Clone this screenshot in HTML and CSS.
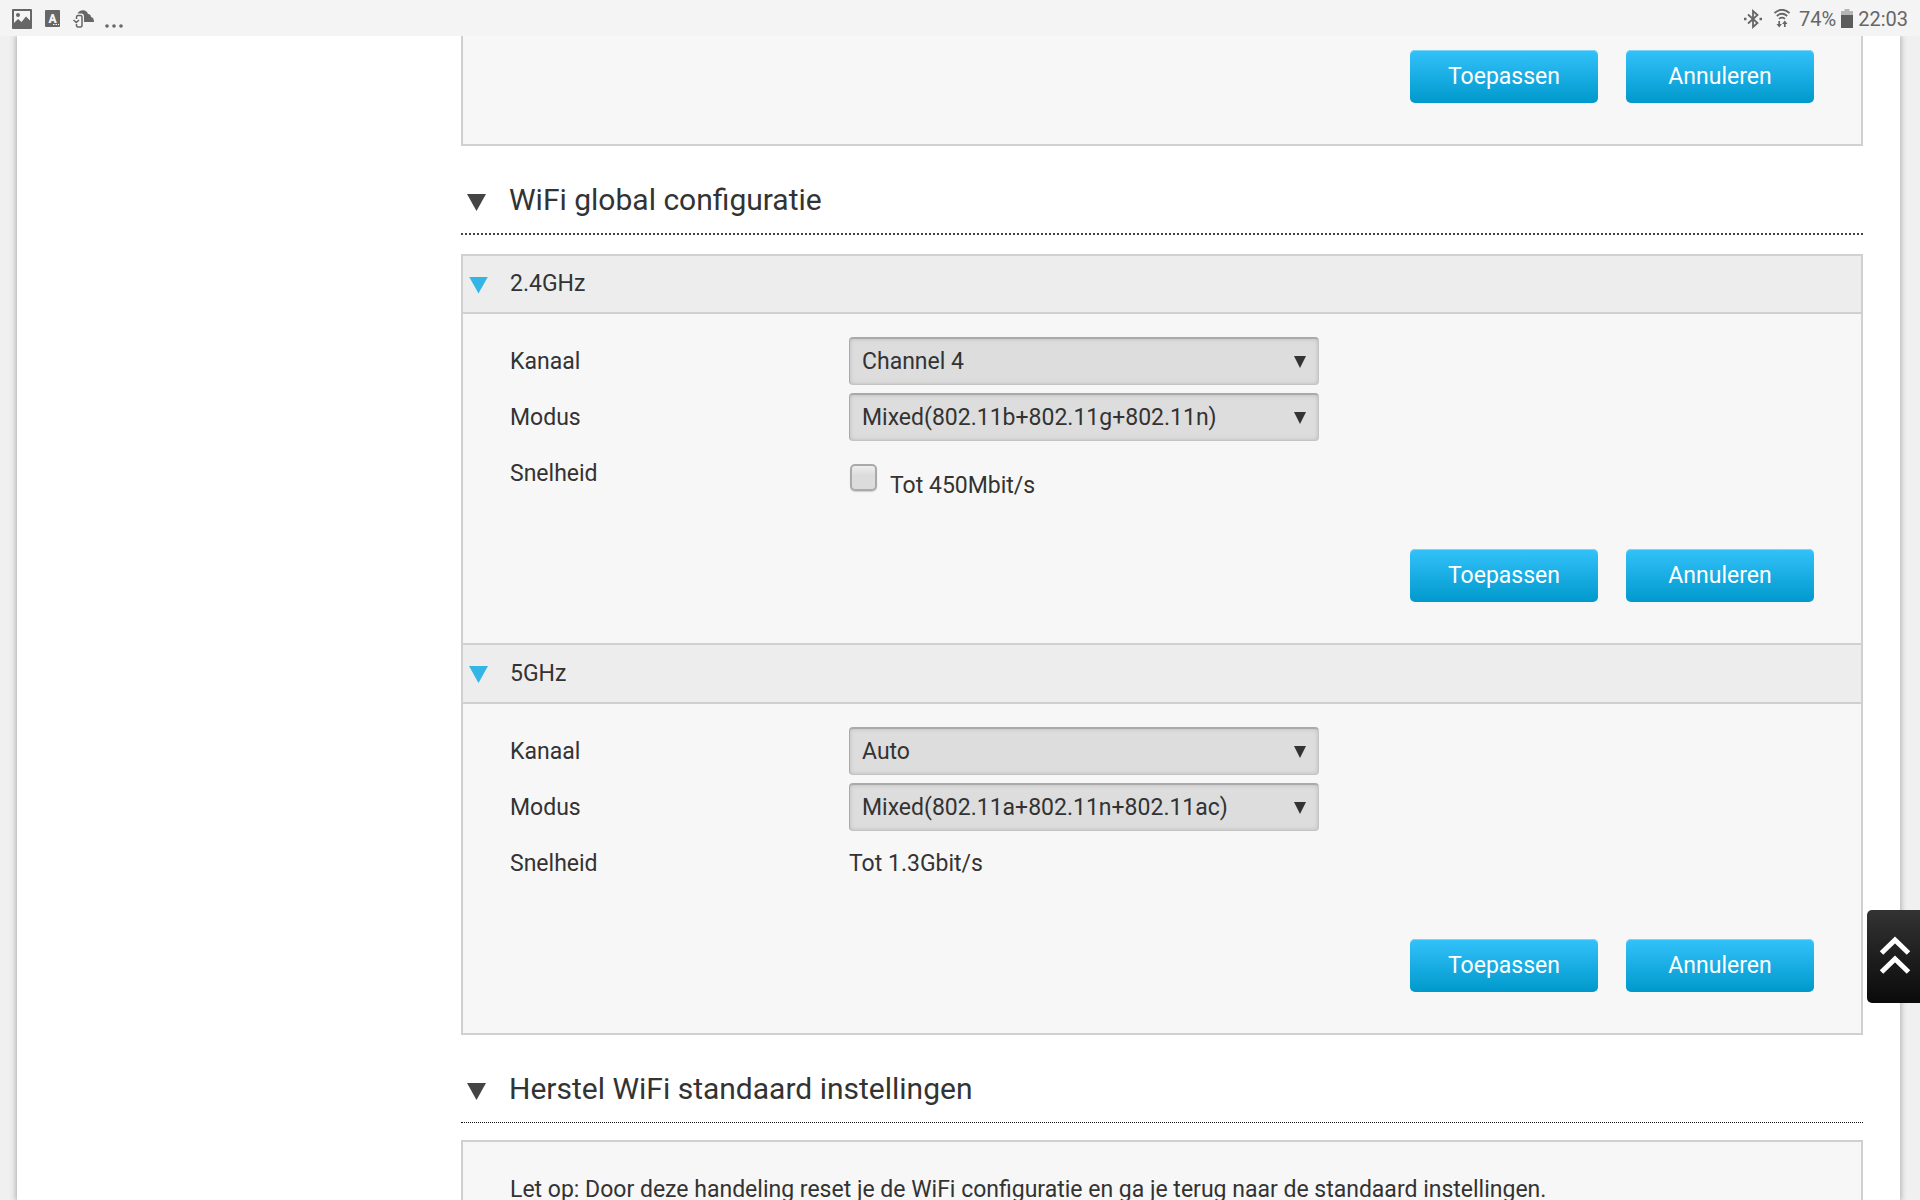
FILE: index.html
```html
<!DOCTYPE html>
<html lang="nl">
<head>
<meta charset="utf-8">
<meta name="viewport" content="width=device-width, initial-scale=1">
<title>WiFi configuratie</title>
<link rel="stylesheet" href="styles.css">
</head>
<body>
<header class="status">
  <div class="status-group">
    <svg class="icon-picture" width="20" height="20" viewBox="0 0 20 20" aria-hidden="true"><path fill="#666" fill-rule="evenodd" d="M1 0h18a1 1 0 0 1 1 1v18a1 1 0 0 1-1 1H1a1 1 0 0 1-1-1V1a1 1 0 0 1 1-1zM2 2v12l4-4 3.500 3L14 7.500l4 4V2z"/><circle cx="6" cy="6" r="2" fill="#666"/></svg>
    <svg class="icon-letter" width="15" height="17" viewBox="0 0 15 17" aria-hidden="true"><rect width="15" height="17" rx="1" fill="#666"/><text x="7.500" y="12.500" text-anchor="middle" font-family="Roboto, sans-serif" font-size="12" font-weight="900" fill="#f4f4f4">A</text><path d="M8 14.500h1.500M10.500 14.500H12M13 14.500h1" stroke="#f4f4f4"/></svg>
    <svg class="icon-cloud" width="21" height="18" viewBox="0 0 21 18" aria-hidden="true"><path fill="#666" d="M4.500 3.500C7-.8 13.500-1 15 4c2 0 3 1.500 3 3 2 .5 3 2 3 5H11V6.500c0-2-1-3-2.500-3z"/><path fill="none" stroke="#666" stroke-width="1.500" d="M3.500 9V7q0-1.500 1.500-1.500h2.500Q9 5.500 9 7v8q0 2-1.500 2H5q-1.500 0-1.500-2v-1M.5 10l2.800 2.500L6 10"/></svg>
    <svg class="icon-dots" width="18" height="4" viewBox="0 0 18 4" aria-hidden="true"><g fill="#666"><circle cx="2" cy="2" r="1.800"/><circle cx="9" cy="2" r="1.800"/><circle cx="16" cy="2" r="1.800"/></g></svg>
  </div>
  <div class="status-group">
    <svg class="icon-bluetooth" width="18" height="20" viewBox="0 0 18 20" aria-hidden="true"><path fill="none" stroke="#666" stroke-width="1.800" d="M4 5.500l9.500 8.500L9 18V2l4.500 4L4 14.500"/><path fill="#666" d="M0 8.700h2.500v2.500H0zM15.500 8.700H18v2.500h-2.500z"/></svg>
    <svg class="icon-wifi" width="16" height="19" viewBox="0 0 16 19" aria-hidden="true"><g fill="none" stroke="#666" stroke-width="1.700"><path d="M.5 4Q8-2.500 15.500 4M2.800 7Q8 2.500 13.200 7M5 9.800Q8 7.500 11 9.800"/><path d="M5.200 12v4M10.800 18v-4"/></g><path fill="#666" d="M2.500 15h5.400l-2.700 3.500zM8.100 15h5.400L10.800 11.500z"/></svg>
    <span class="battery-text">74%</span>
    <svg class="icon-battery" width="12" height="19" viewBox="0 0 12 19" aria-hidden="true"><path fill="#b5b5b5" d="M3.500 0h5v2H12v5H0V2h3.500z"/><path fill="#5c5c5c" d="M0 6h12v13H0z"/></svg>
    <time>22:03</time>
  </div>
</header>

<div class="page">
  <main class="content">
    <section class="panel panel-top">
      <div class="actions">
        <button type="button" class="btn">Toepassen</button>
        <button type="button" class="btn">Annuleren</button>
      </div>
    </section>

    <h2 class="heading"><span class="arrow"></span>WiFi global configuratie</h2>

    <form class="panel">
      <h3 class="band"><span class="arrow arrow-blue"></span>2.4GHz</h3>
      <div class="fields">
        <div class="row">
          <label for="channel-24">Kanaal</label>
          <select id="channel-24"><option>Channel 4</option></select>
        </div>
        <div class="row">
          <label for="mode-24">Modus</label>
          <select id="mode-24"><option>Mixed(802.11b+802.11g+802.11n)</option></select>
        </div>
        <div class="row">
          <span class="name">Snelheid</span>
          <span class="check"><input type="checkbox" id="speed-24"><label for="speed-24">Tot 450Mbit/s</label></span>
        </div>
      </div>
      <div class="actions">
        <button type="button" class="btn">Toepassen</button>
        <button type="button" class="btn">Annuleren</button>
      </div>

      <h3 class="band band-next"><span class="arrow arrow-blue"></span>5GHz</h3>
      <div class="fields">
        <div class="row">
          <label for="channel-5">Kanaal</label>
          <select id="channel-5"><option>Auto</option></select>
        </div>
        <div class="row">
          <label for="mode-5">Modus</label>
          <select id="mode-5"><option>Mixed(802.11a+802.11n+802.11ac)</option></select>
        </div>
        <div class="row">
          <span class="name">Snelheid</span>
          <span class="name">Tot 1.3Gbit/s</span>
        </div>
      </div>
      <div class="actions">
        <button type="button" class="btn">Toepassen</button>
        <button type="button" class="btn">Annuleren</button>
      </div>
    </form>

    <h2 class="heading heading-reset"><span class="arrow"></span>Herstel WiFi standaard instellingen</h2>

    <section class="panel notice">
      <p>Let op: Door deze handeling reset je de WiFi configuratie en ga je terug naar de standaard instellingen.</p>
    </section>
  </main>
</div>

<a class="to-top" href="#" aria-label="Naar boven">
  <svg width="32" height="40" viewBox="0 0 32 40" aria-hidden="true"><path fill="none" stroke="#fff" stroke-width="5" d="M2.500 17L16 4l13.500 13M2.500 36L16 23l13.500 13"/></svg>
</a>
</body>
</html>
```
FILE: styles.css
```css
* {
  box-sizing: border-box;
}

body {
  display: flex;
  flex-direction: column;
  height: 100vh;
  margin: 0;
  overflow: hidden;
  background: #f0f0f0;
  color: #333;
  font: 23px/28px Roboto, sans-serif;
}

h2, h3, p {
  margin: 0;
  font-weight: 400;
}

/* Status bar */
.status {
  display: flex;
  flex: none;
  justify-content: space-between;
  height: 36px;
  padding: 1px 12px 0;
  background: #f4f4f4;
  color: #666;
  font-size: 20px;
  z-index: 1;
}

.status-group {
  display: flex;
  align-items: center;
  gap: 13px;
}

.status-group:last-child {
  gap: 5px;
}

.icon-dots {
  align-self: flex-end;
  margin: 0 0 8px -2px;
}

.icon-wifi {
  margin: 0 4px 0 7px;
}

/* Page sheet */
.page {
  flex: 1;
  min-height: 0;
  margin: 0 20px 0 17px;
  padding: 0 37px 0 444px;
  background: #fff;
  box-shadow: 0 0 6px 1px #aaa;
}

.panel {
  border: 2px solid #d0d0d0;
  background: #f7f7f7;
}

.panel-top {
  padding-top: 14px;
  border-top: 0;
}

.heading {
  display: flex;
  align-items: center;
  gap: 23px;
  height: 89px;
  margin-bottom: 19px;
  padding: 20px 0 0 6px;
  border-bottom: 2px dotted #444;
  font-size: 30px;
  line-height: 36px;
}

.heading-reset {
  height: 88px;
  margin-bottom: 17px;
  border-bottom: 1px dotted #111;
}

.arrow {
  width: 19px;
  height: 17px;
  margin-top: 6px;
  background: #444;
  clip-path: polygon(0 0, 100% 0, 50% 100%);
}

.arrow-blue {
  margin-top: 2px;
  background: #33b5e5;
}

.band {
  display: flex;
  align-items: center;
  gap: 22px;
  height: 58px;
  padding-left: 6px;
  border-bottom: 2px solid #d0d0d0;
  background: #ededed;
  font-size: 23px;
}

.band-next {
  height: 61px;
  border-top: 2px solid #d0d0d0;
}

.fields {
  display: grid;
  gap: 8px;
  padding: 23px 46px 0 47px;
}

.row {
  display: grid;
  grid-template: 48px / 339px 1fr;
  align-items: center;
}

.row > label,
.row > .name {
  padding-top: 2px;
}

select {
  width: 470px;
  height: 48px;
  padding: 0 40px 0 12px;
  appearance: none;
  border: 1px solid #c4c4c4;
  border-top: 2px solid #aaa;
  border-left-color: #aaa;
  border-radius: 4px;
  background: #ddd url("data:image/svg+xml,%3Csvg xmlns='http://www.w3.org/2000/svg' width='12' height='12'%3E%3Cpath d='M0 0h12L6 12z' fill='%23333'/%3E%3C/svg%3E") no-repeat right 12px center;
  box-shadow: inset 0 0 4px #bbb;
  color: #333;
  font: inherit;
}

.check {
  display: flex;
  gap: 13px;
  padding-top: 14px;
}

.check label {
  padding-top: 12px;
}

.check input {
  width: 27px;
  height: 27px;
  margin: 4px 0 0 1px;
  appearance: none;
  border: 2px solid #aaa;
  border-radius: 5px;
  background: linear-gradient(#eee, #dcdcdc 40%);
  box-shadow: 0 1px 1px #ccc;
}

.actions {
  display: flex;
  justify-content: flex-end;
  gap: 28px;
  padding: 52px 47px 41px 0;
}

.panel-top .actions {
  padding-top: 0;
}

.btn {
  width: 188px;
  height: 53px;
  padding: 0;
  border: 0;
  border-radius: 5px;
  background: linear-gradient(#33c2fa, #0099cc);
  box-shadow: inset 0 1px #7fd3f5;
  color: #fff;
  font: inherit;
}

.notice {
  padding: 34px 47px;
}

/* Back to top */
.to-top {
  position: fixed;
  right: 0;
  bottom: 197px;
  display: flex;
  align-items: center;
  justify-content: center;
  width: 53px;
  height: 93px;
  padding: 0 0 2px 3px;
  border-radius: 5px 0 0 5px;
  background: linear-gradient(#333, #0a0a0a);
}
```
